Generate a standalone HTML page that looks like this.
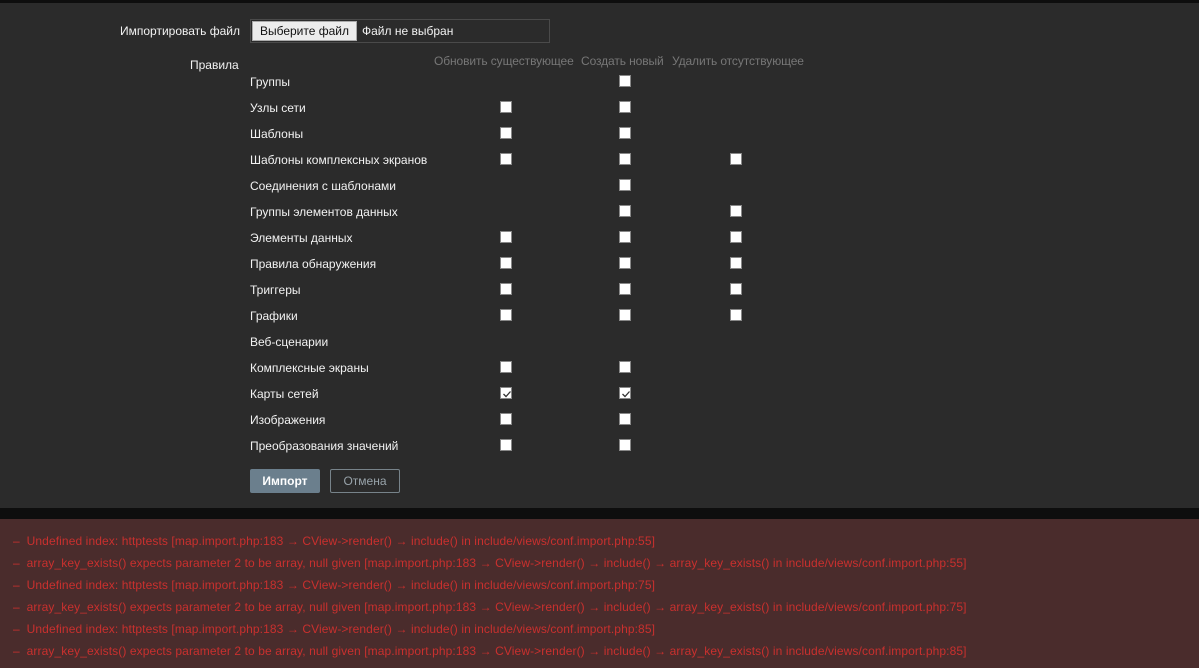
<!DOCTYPE html>
<html><head><meta charset="utf-8"><style>
*{margin:0;padding:0;box-sizing:border-box}
body{width:1199px;height:668px;background:#2b2b2b;font-family:"Liberation Sans",Arial,sans-serif;font-size:12px;color:#f2f2f2;position:relative;overflow:hidden}
.a{position:absolute;white-space:nowrap}
.top{left:0;top:0;width:1199px;height:3px;background:#0e0e0e}
.gap{left:0;top:508px;width:1199px;height:11px;background:#0e0e0e}
.err{left:0;top:519px;width:1199px;height:149px;background:#4a2c2c}
.el{left:13px;color:#c9302e;font-size:12px;letter-spacing:0.1px}
.cb{position:absolute;width:12px;height:12px;background:#fff;border:1px solid #888}
.cb svg{position:absolute;left:1px;top:1px}
.h{color:#777;top:54px;letter-spacing:-0.1px}
.lbl{left:250px}
</style></head><body>
<div class="a top"></div>
<div class="a" style="left:120px;top:24px">Импортировать файл</div>
<div class="a" style="left:250px;top:19px;width:300px;height:24px;border:1px solid #4a4a4a;background:#2b2b2b"></div>
<div class="a" style="left:252px;top:21px;width:105px;height:20px;background:#ececec;border:1px solid #aaa;color:#111;line-height:18px;text-align:center">Выберите файл</div>
<div class="a" style="left:362px;top:24px">Файл не выбран</div>
<div class="a" style="left:190px;top:58px">Правила</div>
<div class="a h" style="left:434px">Обновить существующее</div>
<div class="a h" style="left:581px">Создать новый</div>
<div class="a h" style="left:672px">Удалить отсутствующее</div>
<div id="rows"></div>
<div class="a" style="left:250px;top:469px;width:70px;height:24px;background:#6b7f8d;border-radius:2px;color:#fff;font-weight:bold;text-align:center;line-height:24px">Импорт</div>
<div class="a" style="left:330px;top:469px;width:70px;height:24px;border:1px solid #77838a;border-radius:2px;color:#98a3aa;text-align:center;line-height:22px">Отмена</div>
<div class="a gap"></div>
<div class="a err"></div>
<div class="a el" style="top:534px">– &nbsp;Undefined index: httptests [map.import.php:183 → CView-&gt;render() → include() in include/views/conf.import.php:55]</div>
<div class="a el" style="top:556px">– &nbsp;array_key_exists() expects parameter 2 to be array, null given [map.import.php:183 → CView-&gt;render() → include() → array_key_exists() in include/views/conf.import.php:55]</div>
<div class="a el" style="top:578px">– &nbsp;Undefined index: httptests [map.import.php:183 → CView-&gt;render() → include() in include/views/conf.import.php:75]</div>
<div class="a el" style="top:600px">– &nbsp;array_key_exists() expects parameter 2 to be array, null given [map.import.php:183 → CView-&gt;render() → include() → array_key_exists() in include/views/conf.import.php:75]</div>
<div class="a el" style="top:622px">– &nbsp;Undefined index: httptests [map.import.php:183 → CView-&gt;render() → include() in include/views/conf.import.php:85]</div>
<div class="a el" style="top:644px">– &nbsp;array_key_exists() expects parameter 2 to be array, null given [map.import.php:183 → CView-&gt;render() → include() → array_key_exists() in include/views/conf.import.php:85]</div>
<script>
var R=[["Группы",0,1,0],["Узлы сети",1,1,0],["Шаблоны",1,1,0],["Шаблоны комплексных экранов",1,1,1],["Соединения с шаблонами",0,1,0],["Группы элементов данных",0,1,1],["Элементы данных",1,1,1],["Правила обнаружения",1,1,1],["Триггеры",1,1,1],["Графики",1,1,1],["Веб-сценарии",0,0,0],["Комплексные экраны",1,1,0],["Карты сетей",2,2,0],["Изображения",1,1,0],["Преобразования значений",1,1,0]];
var xs=[500,619,730],h="";
R.forEach(function(r,i){var y=81+26*i;h+='<div class="a lbl" style="top:'+(y-6)+'px">'+r[0]+'</div>';
for(var c=0;c<3;c++)if(r[c+1]){h+='<div class="cb" style="left:'+xs[c]+'px;top:'+(y-6)+'px">'+(r[c+1]==2?'<svg width="10" height="10"><path d="M1.5 5 L4 7.5 L8.5 2.5" stroke="#333" stroke-width="1.3" fill="none"/></svg>':'')+'</div>';}});
document.getElementById('rows').innerHTML=h;
</script>
</body></html>
